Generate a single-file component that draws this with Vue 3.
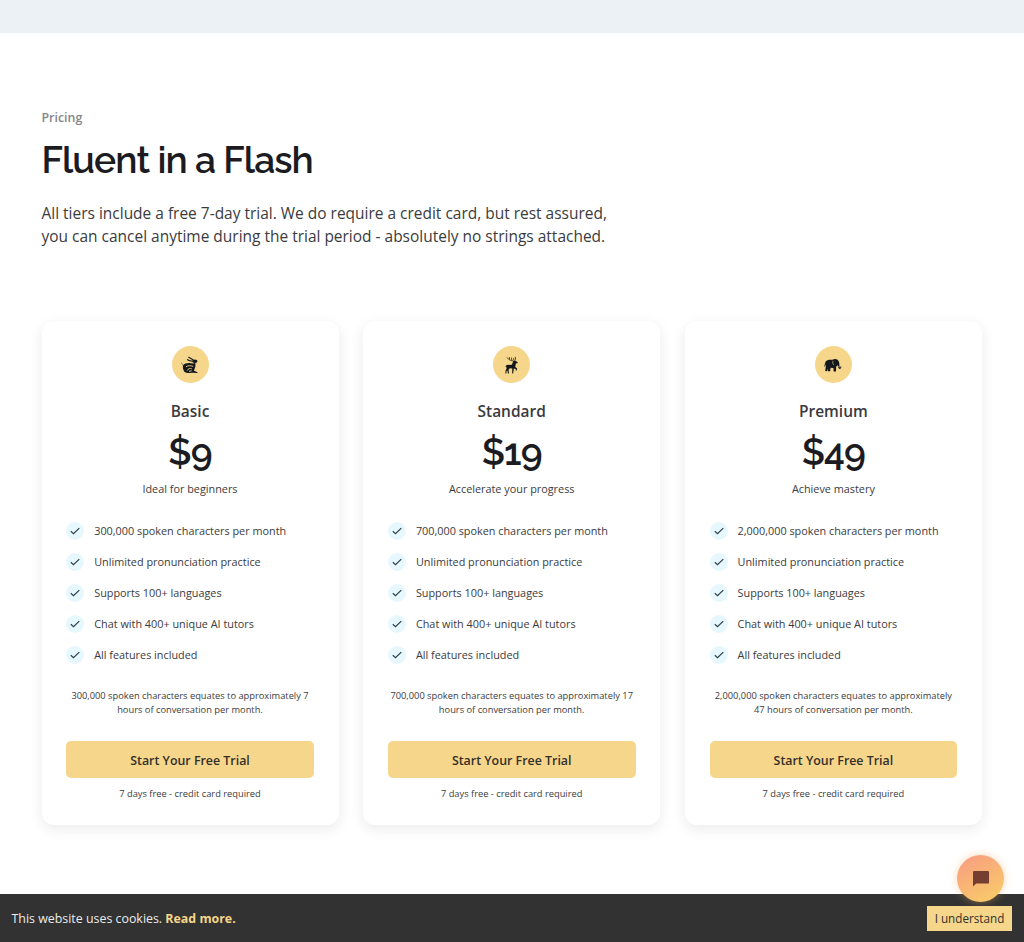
<template>
  <div class="page">
    <div class="top-strip"></div>

    <section class="pricing">
      <div class="eyebrow">Pricing</div>
      <h1>Fluent in a Flash</h1>
      <p class="intro">
        All tiers include a free 7-day trial. We do require a credit card, but rest assured,<br />
        you can cancel anytime during the trial period - absolutely no strings attached.
      </p>

      <div class="cards">
        <div v-for="plan in plans" :key="plan.name" class="card">
          <div class="badge">
            <svg v-if="plan.icon === 'rabbit'" viewBox="0 0 18 18" width="18" height="18">
              <path d="M7.4 1 L9.4 2.2 L12.4 4 M6 3.6 L8.4 4.6 L11.6 5.2" stroke="#14181c" stroke-width="1.1" fill="none" />
              <ellipse cx="13.8" cy="5.3" rx="2.7" ry="1.8" />
              <path d="M0.7 6.6 L2 9.2 C4 7 8 6.6 12.4 7.6 L14.4 6.8 L14.4 10.4 L13 14.8 L16.6 16.2 L16.4 17 L11 16.8 C8 17.4 4.6 17 3.2 15.4 C1.6 13 1.8 10.8 2 9.8 L0.4 7 Z" />
              <path d="M5 10.8 C7 9.2 10 9.6 12.2 10.4 M6.2 14.6 C7 12.4 9.4 12.2 10.8 12.8 M8 15.4 L10.6 14.8" stroke="#f6d68b" stroke-width="0.9" fill="none" />
            </svg>
            <svg v-else-if="plan.icon === 'deer'" viewBox="0 0 18 18" width="18" height="18">
              <path d="M10.8 5 C8 4.8 5.4 3.8 4 1.4 M6.6 3.6 L6.4 1 M8.8 4.6 L8.4 1.6 M11.4 5 C12.6 4 12.8 2.4 12.2 0.8 M10.8 4.2 L10.6 2" stroke="#14181c" stroke-width="0.7" fill="none" />
              <path d="M10.4 5 L12.4 4.8 L14.8 6.2 L14.4 7.2 L12.8 7.4 L12.3 11 L14.2 12.4 L13.4 14.8 L12.6 14.6 L12.8 13 L10.8 12.4 L10.2 17.6 L9.2 17.6 L9.2 12.4 L6.8 12.2 L5.6 13.8 L6 17.6 L4.9 17.6 L4.4 14.4 L3.6 15 L3.4 17.4 L2.4 17.4 L2.6 14.4 L3.6 12.6 L3.2 10.6 L2.2 11 L3.6 9 L8.8 8.8 Z" />
            </svg>
            <svg v-else viewBox="0 0 18 18" width="18" height="18">
              <path d="M1.4 6 C2.4 3.8 5.6 3.4 8.6 3.8 C10 2.6 13 2.8 14.2 4.6 C15.6 6 15.2 8.6 15.6 11 C15.9 12 16.6 11.4 16.4 10.4 L17.2 10.2 C17.6 12.6 16 13.6 14.8 12.6 C14 11.8 14 10.4 13.6 9.6 L12.2 10.6 L12 15.4 L9.6 15.4 L9.4 12 L6.6 11.8 L6.2 15.2 L3.8 15.2 L3.7 12.4 L3 15.2 L1.2 14.9 L1.8 10.6 L1.3 8.2 L0.8 10.8 L0.2 10.6 Z" />
              <path d="M9 4.8 C8.4 6.2 8.8 8.2 10 9 M13 9.8 L15.2 11" stroke="#f6d68b" stroke-width="0.6" fill="none" />
            </svg>
          </div>
          <h2>{{ plan.name }}</h2>
          <div class="price">{{ plan.price }}</div>
          <div class="tagline">{{ plan.tagline }}</div>

          <ul>
            <li v-for="feature in [plan.characters + ' spoken characters per month', ...shared]" :key="feature">
              <span class="check">
                <svg viewBox="0 0 12 12" width="12" height="12">
                  <path d="M1.8 6.3 L4.5 8.6 L10.3 3.1" />
                </svg>
              </span>
              <span class="label">{{ feature }}</span>
            </li>
          </ul>

          <p class="note">{{ plan.note[0] }}<br />{{ plan.note[1] }}</p>
          <button class="trial">Start Your Free Trial</button>
          <div class="terms">7 days free - credit card required</div>
        </div>
      </div>
    </section>

    <footer class="cookies">
      <div class="cookie-text">This website uses cookies. <a>Read more.</a></div>
      <button class="accept">I understand</button>
    </footer>

    <div class="chat">
      <svg viewBox="0 0 16 16" width="16" height="16">
        <path d="M1.2 0 H14.8 Q16 0 16 1.2 V11.4 Q16 12.6 14.8 12.6 H3.2 L0 15.6 V1.2 Q0 0 1.2 0 Z" />
      </svg>
    </div>
  </div>
</template>

<script setup>
const shared = [
  'Unlimited pronunciation practice',
  'Supports 100+ languages',
  'Chat with 400+ unique AI tutors',
  'All features included'
]

const plans = [
  {
    name: 'Basic',
    icon: 'rabbit',
    price: '$9',
    tagline: 'Ideal for beginners',
    characters: '300,000',
    note: ['300,000 spoken characters equates to approximately 7', 'hours of conversation per month.']
  },
  {
    name: 'Standard',
    icon: 'deer',
    price: '$19',
    tagline: 'Accelerate your progress',
    characters: '700,000',
    note: ['700,000 spoken characters equates to approximately 17', 'hours of conversation per month.']
  },
  {
    name: 'Premium',
    icon: 'elephant',
    price: '$49',
    tagline: 'Achieve mastery',
    characters: '2,000,000',
    note: ['2,000,000 spoken characters equates to approximately', '47 hours of conversation per month.']
  }
]
</script>

<style>
body {
  background: #fff;
  overflow: hidden;
}
</style>

<style scoped>
.page {
  display: flex;
  flex-direction: column;
  height: 942px;
  box-sizing: border-box;
  font-family: 'Open Sans', 'Noto Sans', sans-serif;
  color: #3b3b3d;
}

.top-strip {
  flex: none;
  height: 33px;
  background: #ebf1f5;
}

.pricing {
  flex: 1;
  min-height: 0;
  padding: 76px 41.5px 0;
}

.eyebrow {
  font-size: 12.4px;
  line-height: 18px;
  font-weight: 600;
  color: #858588;
}

h1 {
  margin: 8px 0 0;
  font-family: Raleway, Lato, sans-serif;
  font-size: 37.2px;
  line-height: 50px;
  font-weight: 600;
  letter-spacing: -0.93px;
  color: #1b1b21;
}

.intro {
  margin: 17px 0 0;
  font-size: 15.47px;
  line-height: 23.2px;
}

.cards {
  display: grid;
  grid-template-columns: repeat(3, 297px);
  gap: 24.7px;
  margin-top: 72.6px;
}

.card {
  display: flex;
  flex-direction: column;
  align-items: center;
  box-sizing: border-box;
  height: 504px;
  padding: 25px 24.7px 0;
  border-radius: 12px;
  background: #fff;
  box-shadow: 0 4px 14px rgba(30, 30, 50, 0.09);
}

.badge {
  display: flex;
  align-items: center;
  justify-content: center;
  width: 37px;
  height: 37px;
  border-radius: 50%;
  background: #f6d68b;
}

.badge svg {
  fill: #14181c;
}

h2 {
  margin: 17px 0 0;
  font-size: 15.47px;
  line-height: 22px;
  font-weight: 600;
  color: #3a3a3e;
}

.price {
  height: 50px;
  margin-top: 5px;
  font-family: Raleway, Lato, sans-serif;
  font-size: 37.2px;
  line-height: 50px;
  font-weight: 600;
  letter-spacing: -0.93px;
  color: #1b1b21;
}

.tagline {
  margin-top: 4px;
  font-size: 10.85px;
  line-height: 16px;
}

ul {
  align-self: stretch;
  margin: 25px 0 0;
  padding: 0;
  list-style: none;
}

li {
  display: flex;
  align-items: center;
  gap: 10px;
  height: 18px;
  margin-bottom: 13px;
  font-size: 10.85px;
}

.label {
  padding-bottom: 2px;
}

.check {
  display: flex;
  align-items: center;
  justify-content: center;
  width: 18px;
  height: 18px;
  border-radius: 50%;
  background: #e6f8fe;
}

.check path {
  fill: none;
  stroke: #2c3e46;
  stroke-width: 1.2;
}

.note {
  margin: 12px 0 0;
  font-size: 9.3px;
  line-height: 14px;
  text-align: center;
}

.trial {
  width: 100%;
  height: 37px;
  margin-top: 24.4px;
  padding: 1px 0 0;
  border: 0;
  border-radius: 5px;
  background: #f6d68b;
  font: 600 12.4px 'Open Sans', sans-serif;
  color: #33302a;
}

.terms {
  margin-top: 9px;
  font-size: 9.3px;
  line-height: 14px;
}

.cookies {
  flex: none;
  display: flex;
  align-items: center;
  justify-content: space-between;
  box-sizing: border-box;
  height: 48px;
  padding: 0 12px 0 11.5px;
  background: #323232;
  color: #ececec;
  font-size: 12.4px;
}

.cookies a {
  font-weight: 700;
  color: #f6d68b;
}

.accept {
  width: 85px;
  height: 25px;
  padding: 0;
  border: 0;
  background: #f6d68b;
  font: 11.7px 'Open Sans', sans-serif;
  color: #33302a;
}

.chat {
  position: absolute;
  left: 957px;
  top: 855px;
  display: flex;
  align-items: center;
  justify-content: center;
  width: 47px;
  height: 47px;
  border-radius: 50%;
  background: linear-gradient(150deg, #f9a080 10%, #f8cd68 95%);
  box-shadow: 0 0 9px rgba(249, 175, 100, 0.45);
}

.chat path {
  fill: #743f31;
}
</style>
